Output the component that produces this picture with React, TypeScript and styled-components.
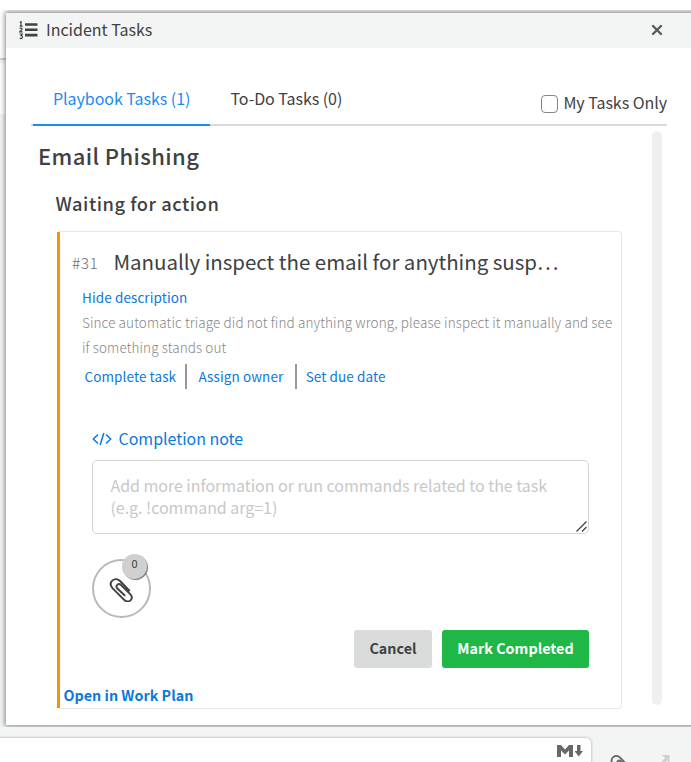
import React from "react";
import styled, { createGlobalStyle } from "styled-components";

const Global = createGlobalStyle`
  * { box-sizing: border-box; }
  body { margin: 0; background: #f3f5f4; overflow: hidden; }
  body, button, textarea { font-family: "Noto Sans CJK SC", "Noto Sans", sans-serif; }
`;

const Page = styled.div`
  width: 691px;
  height: 762px;
  overflow: hidden;
  background: #f3f5f4;
  color: #404142;
`;

const TopStrip = styled.div`
  position: relative;
  z-index: 2;
  height: 10px;
  background: #fff;
`;

const Stage = styled.div`
  display: flex;
  height: 717px;
  padding-top: 3px;
  overflow: hidden;
`;

const Backdrop = styled.div`
  width: 6px;
  height: 712px;
  margin-top: -3px;
  flex: none;
  background: linear-gradient(#fff 0 48px, #cfd0d0 48px 50px, #f3f5f4 50px 53px, #fff 53px 104px, #f3f5f4 104px);
`;

const Panel = styled.section`
  position: relative;
  width: 700px;
  height: 712px;
  flex: none;
  background: #fff;
  box-shadow: 0 0 5px 1px rgba(0, 0, 0, 0.48);
`;

const Header = styled.header`
  display: flex;
  align-items: center;
  height: 35px;
  padding: 0 43px 0 13px;
  background: #f3f5f4;
`;

const HeaderTitle = styled.h1`
  flex: 1;
  margin: -3px 0 0 8px;
  font-size: 16px;
  line-height: 24px;
  font-weight: 400;
`;

const CloseButton = styled.button`
  display: flex;
  margin-top: -2px;
  padding: 0;
  border: 0;
  background: none;
`;

const Tabs = styled.nav`
  display: flex;
  width: 636px;
  height: 78px;
  margin-left: 25px;
  padding-left: 2px;
  border-bottom: 2px solid #d9d9d9;
`;

const Tab = styled.div<{ $active?: boolean }>`
  height: 78px;
  width: ${(p) => (p.$active ? 177 : 158)}px;
  padding: 38px 0 0 ${(p) => (p.$active ? 20 : 20.5)}px;
  border-bottom: ${(p) => (p.$active ? "2px solid #1b8cf0" : "0")};
  color: ${(p) => (p.$active ? "#1b8cf0" : "#404142")};
  font-size: 16px;
  letter-spacing: -0.04px;
  line-height: 24px;
  white-space: nowrap;
`;

const MineOnly = styled.label`
  display: flex;
  align-items: center;
  height: 26px;
  margin: 41px 0 0 auto;
  gap: 5.3px;
  font-size: 16px;
  letter-spacing: -0.04px;
  line-height: 24px;
  white-space: nowrap;
`;

const CheckBox = styled.span`
  width: 17px;
  height: 18px;
  margin-top: 4px;
  border: 1px solid #858585;
  border-radius: 4px;
`;

const Body = styled.div`
  display: flex;
  padding-top: 5px;
`;

const Content = styled.main`
  width: 646px;
`;

const ScrollBar = styled.div`
  width: 10px;
  height: 574px;
  border-radius: 5px;
  background: #efefef;
`;

const PlaybookName = styled.h2`
  margin: 7px 0 0 32px;
  font-size: 22px;
  letter-spacing: 0.4px;
  line-height: 34px;
  font-weight: 500;
`;

const StatusName = styled.h3`
  margin: 18px 0 0 49.5px;
  font-size: 18.3px;
  letter-spacing: 0.53px;
  line-height: 26px;
  font-weight: 500;
`;

const Card = styled.article`
  width: 565px;
  height: 478px;
  margin: 15px 0 0 51px;
  border: 1px solid #e8e8e8;
  border-left: 0;
  border-radius: 4px;
  display: flex;
`;

const Accent = styled.div`
  width: 3px;
  flex: none;
  background: #ee9700;
`;

const CardBody = styled.div`
  flex: 1;
  display: flex;
  flex-direction: column;
  align-items: flex-start;
`;

const TaskTitle = styled.div`
  display: flex;
  align-items: center;
  height: 32px;
  margin: 14px 0 0 12px;
  gap: 15px;
  white-space: nowrap;
`;

const TaskNumber = styled.span`
  margin-top: -1px;
  font-size: 15.5px;
  letter-spacing: 0.5px;
  line-height: 24px;
  font-weight: 300;
  color: #6d6e6f;
`;

const TaskName = styled.span`
  margin-top: -3px;
  font-size: 20.5px;
  letter-spacing: -0.03px;
  line-height: 32px;
`;

const Link = styled.a`
  font-size: 13.5px;
  letter-spacing: 0.1px;
  line-height: 20px;
  color: #0b78dc;
  white-space: nowrap;
`;

const HideLink = styled(Link)`
  margin: 9px 0 0 22px;
`;

const Description = styled.p`
  margin: 3px 0 0 22px;
  font-size: 13.5px;
  letter-spacing: 0.105px;
  line-height: 25px;
  font-weight: 300;
  color: #858687;
  white-space: nowrap;
`;

const Actions = styled.div`
  display: flex;
  align-items: center;
  height: 25px;
  margin: 4px 0 0 24.5px;

  a {
    margin-top: -1px;
  }
`;

const Divider = styled.i`
  width: 2px;
  height: 25px;
  margin: 0 11.3px 0 9px;
  background: #999;

  & ~ & {
    margin-right: 9px;
    margin-left: 11.3px;
  }
`;

const NoteLabel = styled.div`
  display: flex;
  align-items: center;
  height: 24px;
  margin: 37px 0 0 32px;
  gap: 6.5px;
  color: #0b78dc;
  font-size: 16px;
  letter-spacing: -0.03px;
  line-height: 24px;

  svg {
    margin-top: 1px;
  }
`;

const NoteBox = styled.div`
  display: flex;
  width: 497px;
  height: 74px;
  margin: 10px 0 0 32px;
  padding: 13px 1px 1px 17.5px;
  border: 1px solid #d5d5d5;
  border-radius: 5px;
  color: #c8c8c8;
  font-size: 16px;
  letter-spacing: -0.035px;
  line-height: 22px;
  white-space: pre;

  svg {
    margin: auto 0 0 auto;
  }
`;

const Attach = styled.div`
  position: relative;
  display: flex;
  align-items: center;
  justify-content: center;
  width: 59px;
  height: 59px;
  margin: 25px 0 0 32px;
  padding: 1px 1px 0 0;
  border: 2px solid #b9b9b9;
  border-radius: 50%;
`;

const Badge = styled.span`
  position: absolute;
  top: -7px;
  left: 28px;
  width: 25px;
  height: 25px;
  border-radius: 50%;
  background: #d0d0d0;
  box-shadow: 1px 1px 1px #777;
  text-align: center;
  font-size: 11px;
  line-height: 18px;
`;

const Buttons = styled.div`
  display: flex;
  gap: 10px;
  margin: 12px 0 0 294px;
`;

const Button = styled.button<{ $primary?: boolean }>`
  width: ${(p) => (p.$primary ? 147 : 78)}px;
  height: 38px;
  padding: 0 0 2px;
  border: 0;
  border-radius: 3px;
  background: ${(p) => (p.$primary ? "#1fb847" : "#dadcdb")};
  color: ${(p) => (p.$primary ? "#fff" : "#404142")};
  font-size: 14.3px;
  letter-spacing: 0.03px;
  line-height: 36px;
  font-weight: 700;
  white-space: nowrap;
`;

const PlanLink = styled(Link)`
  margin: 17px 0 0 3.5px;
  font-size: 14.3px;
  letter-spacing: 0.02px;
  font-weight: 700;
`;

const Footer = styled.footer`
  display: flex;
  height: 35px;
  padding-top: 11px;
  overflow: hidden;
`;

const Composer = styled.div`
  width: 601px;
  height: 60px;
  margin-left: -10px;
  padding: 7px 8px 0 0;
  border-radius: 5px;
  background: #fff;
  box-shadow: 0 0 3px rgba(0, 0, 0, 0.35);

  svg {
    display: block;
    margin-left: auto;
  }
`;

const FooterIcons = styled.div`
  display: flex;
  gap: 27px;
  padding: 16px 0 0 19px;
`;

const Clip = ({ size, color }: { size: number; color: string }) => (
  <svg width={size} height={size} viewBox="0 0 26 26" fill="none" stroke={color} strokeWidth="2" strokeLinecap="round">
    <path d="M21 14 11.8 4.4C9.4 1.9 6 1.4 3.6 3.5 1.2 5.8 1.3 9 3.6 11.6L16 24c2 1.8 4.5 1.9 6.3.3 1.8-1.8 1.8-4.3 0-6.3L12.5 8.4c-1.3-1.2-2.8-1.2-3.9-.2-1.1 1.1-1 2.6.1 3.8L16.2 19" />
  </svg>
);

const ListIcon = () => (
  <svg width="19" height="19" viewBox="0 0 19 19" fill="none" stroke="#404142">
    <path d="M6 3.5h12.5M6 8.8h12.5M6 14.1h12.5" strokeWidth="2.6" />
    <path d="M.8 1.4 2 .8v4.3M.6 5.2h3M.6 7.7c1-1 2.6-.6 2.4.6L.8 10.8h2.8M.7 13h2.5l-1.2 1.6c2 0 1.8 3-.2 3L.6 17.2" strokeWidth="1.2" />
  </svg>
);

export default function App() {
  return (
    <Page>
      <Global />
      <TopStrip />
      <Stage>
        <Backdrop />
        <Panel>
          <Header>
            <ListIcon />
            <HeaderTitle>Incident Tasks</HeaderTitle>
            <CloseButton aria-label="Close">
              <svg width="12" height="12" viewBox="0 0 12 12" stroke="#5a5b5d" strokeWidth="2.4" strokeLinecap="round">
                <path d="M2 2l8 8M10 2l-8 8" />
              </svg>
            </CloseButton>
          </Header>
          <Tabs>
            <Tab $active>Playbook Tasks (1)</Tab>
            <Tab>To-Do Tasks (0)</Tab>
            <MineOnly>
              <CheckBox />
              My Tasks Only
            </MineOnly>
          </Tabs>
          <Body>
            <Content>
              <PlaybookName>Email Phishing</PlaybookName>
              <StatusName>Waiting for action</StatusName>
              <Card>
                <Accent />
                <CardBody>
                  <TaskTitle>
                    <TaskNumber>#31</TaskNumber>
                    <TaskName>Manually inspect the email for anything susp…</TaskName>
                  </TaskTitle>
                  <HideLink>Hide description</HideLink>
                  <Description>
                    Since automatic triage did not find anything wrong, please inspect it manually and see
                    <br />
                    if something stands out
                  </Description>
                  <Actions>
                    <Link>Complete task</Link>
                    <Divider />
                    <Link>Assign owner</Link>
                    <Divider />
                    <Link>Set due date</Link>
                  </Actions>
                  <NoteLabel>
                    <svg width="20" height="14" viewBox="0 0 20 14" fill="none" stroke="#0b78dc" strokeWidth="1.5">
                      <path d="M6 2.5 1.3 7 6 11.5M14 2.5 18.7 7 14 11.5M11.8 1 8.2 13" />
                    </svg>
                    Completion note
                  </NoteLabel>
                  <NoteBox>
                    {"Add more information or run commands related to the task\n(e.g. !command arg=1)"}
                    <svg width="11" height="11" viewBox="0 0 11 11" stroke="#404142" strokeWidth="1.3">
                      <path d="M.5 10.5l10-10M6 10.5l4.5-4.5" />
                    </svg>
                  </NoteBox>
                  <Attach>
                    <Clip size={25} color="#404142" />
                    <Badge>0</Badge>
                  </Attach>
                  <Buttons>
                    <Button>Cancel</Button>
                    <Button $primary>Mark Completed</Button>
                  </Buttons>
                  <PlanLink>Open in Work Plan</PlanLink>
                </CardBody>
              </Card>
            </Content>
            <ScrollBar />
          </Body>
        </Panel>
      </Stage>
      <Footer>
        <Composer>
          <svg width="26" height="12" viewBox="0 0 26 12" fill="#666769">
            <path d="M0 12V0h4l4 4.5L12 0h4v12h-4V5.5L8 9.5 4 5.5V12zM20 0h3.5v6H26l-4.25 5.5L17.5 6H20z" />
          </svg>
        </Composer>
        <FooterIcons>
          <Clip size={23} color="#666769" />
          <svg width="10" height="12" viewBox="0 0 10 12" fill="#cfd1d0">
            <path d="M2 1h7.5v8L7 6.5 2.5 11 .5 9l4.5-5z" />
          </svg>
        </FooterIcons>
      </Footer>
    </Page>
  );
}
